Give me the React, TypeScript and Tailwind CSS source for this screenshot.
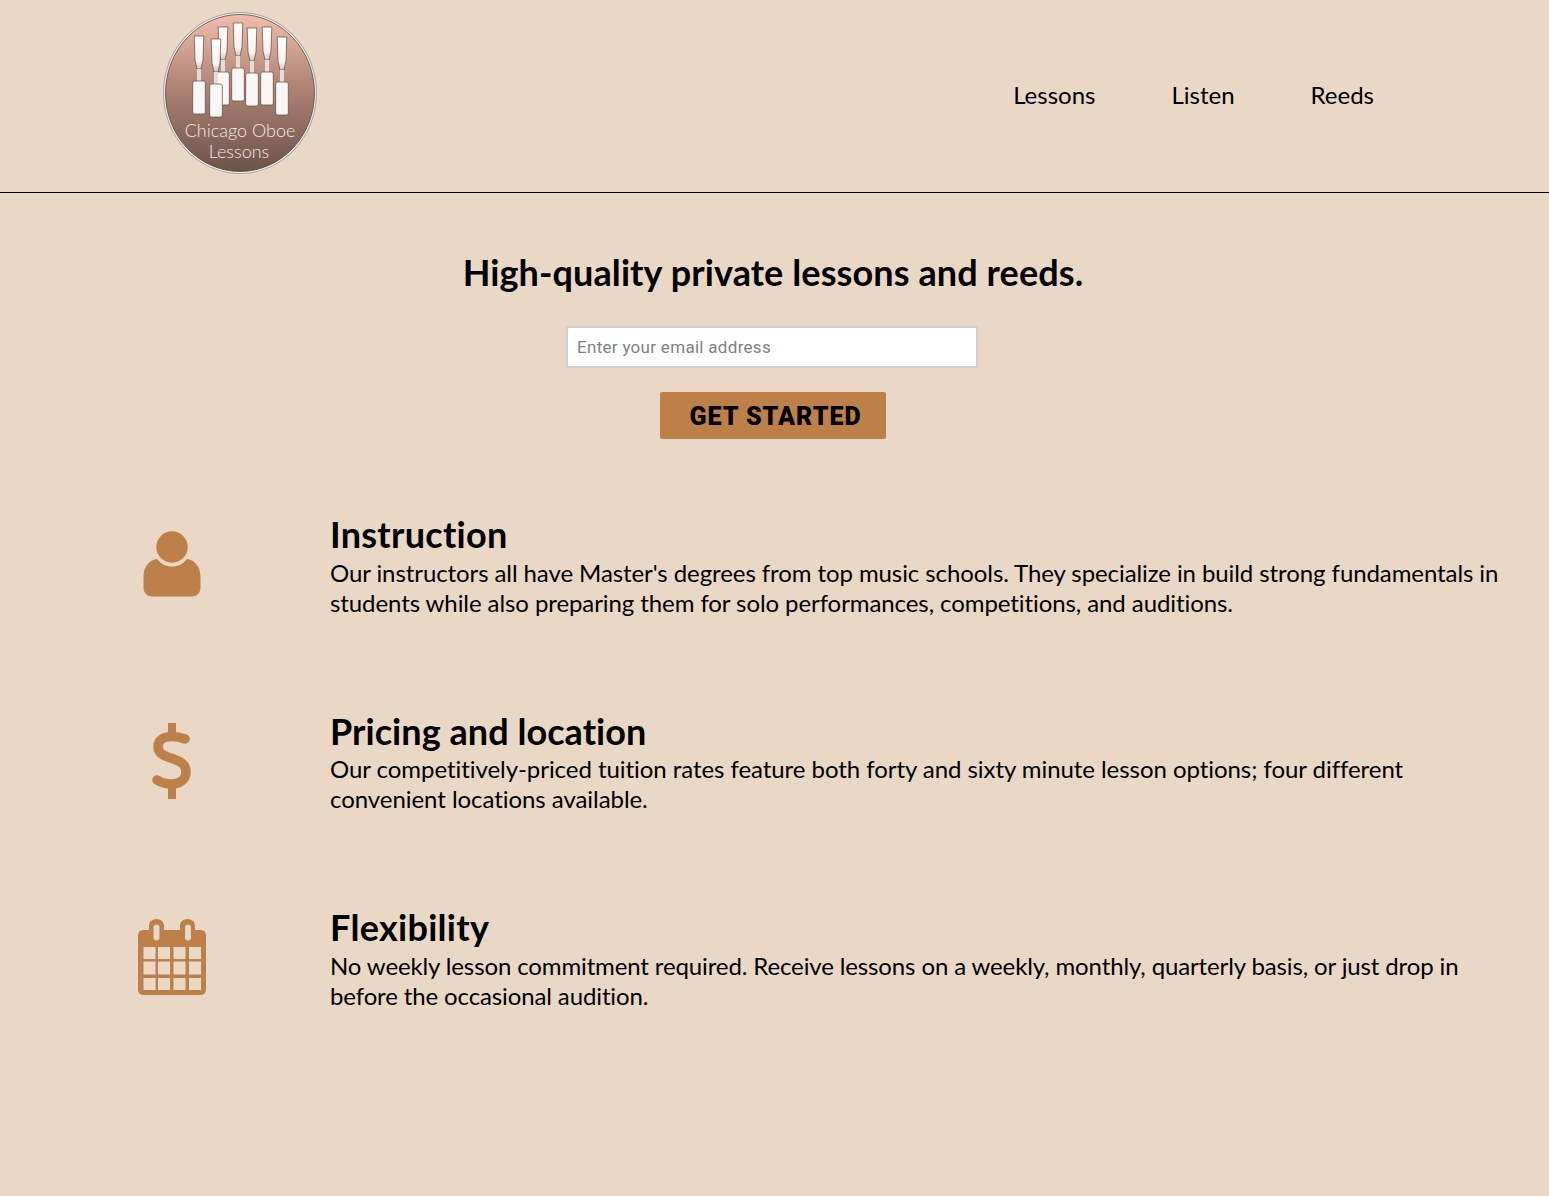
function Reed({ x, y }: { x: number; y: number }) {
  return (
    <g transform={`translate(${x} ${y})`}>
      <path d="M-4.800 0H4.800L4 24L2 33H-2L-4 24Z" fill="url(#blade)" stroke="#5b4742" strokeWidth="0.7" />
      <rect x="-2" y="33" width="4" height="12" fill="#e4dcd8" />
      <rect x="-6.300" y="45" width="12.600" height="33" rx="2" fill="#f8f7f6" stroke="#5b4742" strokeWidth="0.7" />
    </g>
  );
}

function Logo() {
  return (
    <svg width="157" height="168" viewBox="0 0 157 168" className="block">
      <defs>
        <linearGradient id="disc" x1="0" y1="0" x2="0" y2="1">
          <stop offset="0" stopColor="#f1bcaa" />
          <stop offset="0.5" stopColor="#a97f70" />
          <stop offset="1" stopColor="#6e5249" />
        </linearGradient>
        <linearGradient id="blade" x1="0" y1="0" x2="0" y2="1">
          <stop offset="0" stopColor="#ffffff" />
          <stop offset="0.75" stopColor="#f6f3f1" />
          <stop offset="1" stopColor="#cfc4bf" />
        </linearGradient>
      </defs>
      <ellipse cx="78" cy="81" rx="77" ry="81" fill="#a8a3a0" />
      <ellipse cx="78" cy="81" rx="76" ry="80" fill="#f1f0ef" />
      <ellipse cx="78" cy="81" rx="74.500" ry="78.500" fill="url(#disc)" stroke="#5d4741" strokeWidth="0.8" />
      <Reed x={61} y={15} />
      <Reed x={76} y={11} />
      <Reed x={90} y={16} />
      <Reed x={105} y={15} />
      <Reed x={37} y={24} />
      <Reed x={54} y={27} />
      <Reed x={120} y={25} />
      <text x="78" y="125" textAnchor="middle" fill="#f0ebe8" fontSize="18" fontFamily="Lato, sans-serif" fontWeight="300">
        Chicago Oboe
      </text>
      <text x="77" y="146" textAnchor="middle" fill="#f0ebe8" fontSize="18" fontFamily="Lato, sans-serif" fontWeight="300">
        Lessons
      </text>
    </svg>
  );
}

function PersonIcon() {
  return (
    <svg width="58" height="68" viewBox="0 0 58 68" fill="#bc8048">
      <circle cx="29" cy="17" r="15.700" />
      <path d="M14 29C18 34 23 36.500 29 36.500S40 34 44 29C52 30 57.500 37 57.500 47V57C57.500 63 54 66.500 49 66.500H9C4 66.500 .5 63 .5 57V47C.5 37 6 30 14 29Z" />
    </svg>
  );
}

function DollarIcon() {
  return (
    <svg width="40" height="78" viewBox="0 0 40 78" fill="none">
      <path d="M16 1H24V11H16ZM16 66H24V77H16Z" fill="#bc8048" />
      <path
        d="M33 17C29 15.500 25 14.500 20 14.500C11 14.500 6 18.500 6 24.500C6 31.500 12 34 20 36.500C28 39 34 42 34 50C34 57.500 28 62 19.500 62C14 62 9 60.500 5 58"
        stroke="#bc8048"
        strokeWidth="9.500"
        strokeLinecap="round"
      />
    </svg>
  );
}

function CalendarIcon() {
  const cols = [5.500, 20, 35.500, 51];
  const rows = [
    { y: 28, h: 12 },
    { y: 42.500, h: 13 },
    { y: 59, h: 12 },
  ];
  return (
    <svg width="68" height="76" viewBox="0 0 68 76">
      <path
        fillRule="evenodd"
        fill="#bc8048"
        d="M11 11V7C11 3 14 0 18.500 0S26 3 26 7V11H42V7C42 3 45 0 49.500 0S57 3 57 7V11H62C66 11 68 13 68 17V70C68 74 66 76 62 76H6C2 76 0 74 0 70V17C0 13 2 11 6 11ZM15.500 8V19C15.500 20.500 17 21.500 18.500 21.500S21.500 20.500 21.500 19V8C21.500 6.500 20 5.500 18.500 5.500S15.500 6.500 15.500 8ZM47 8V19C47 20.500 48.500 21.500 50 21.500S53 20.500 53 19V8C53 6.500 51.500 5.500 50 5.500S47 6.500 47 8Z"
      />
      {rows.map((r) =>
        cols.map((x) => <rect key={`${x}-${r.y}`} x={x} y={r.y} width="12" height={r.h} fill="#ebd9c8" />),
      )}
    </svg>
  );
}

const features = [
  {
    icon: <PersonIcon />,
    pad: "pt-[18px]",
    titleClass: "tracking-[0.27px]",
    bodyClass: "pt-px tracking-[-0.085px]",
    title: "Instruction",
    body: "Our instructors all have Master's degrees from top music schools. They specialize in build strong fundamentals in students while also preparing them for solo performances, competitions, and auditions.",
  },
  {
    icon: <DollarIcon />,
    pad: "pt-[13px]",
    titleClass: "tracking-[0.05px]",
    bodyClass: "pb-px tracking-[-0.055px]",
    title: "Pricing and location",
    body: "Our competitively-priced tuition rates feature both forty and sixty minute lesson options; four different convenient locations available.",
  },
  {
    icon: <CalendarIcon />,
    pad: "pt-[14px]",
    titleClass: "tracking-[0.3px]",
    bodyClass: "pt-px tracking-[-0.125px]",
    title: "Flexibility",
    body: "No weekly lesson commitment required. Receive lessons on a weekly, monthly, quarterly basis, or just drop in before the occasional audition.",
  },
];

export default function App() {
  return (
    <div className="min-h-[1196px] bg-[#e9d8c6] font-['Lato',sans-serif] text-black [font-variant-ligatures:none]">
      <header className="flex h-[193px] items-center border-b border-black pl-[162px] pr-[175px]">
        <Logo />
        <nav className="mb-[3px] ml-auto flex gap-[76px] text-2xl leading-8">
          <a>Lessons</a>
          <a>Listen</a>
          <a>Reeds</a>
        </nav>
      </header>
      <main>
        <section className="flex flex-col items-center pr-[5px] pt-[57px]">
          <h1 className="ml-[2px] text-[36px] font-bold leading-[45px] tracking-[0.1px]">High-quality private lessons and reeds.</h1>
          <input
            className="mt-[31px] h-[42px] w-[412px] border-2 border-[#cfcfcf] bg-white px-[9px] font-['Roboto',sans-serif] text-[17px] tracking-[0.3px] outline-none placeholder:text-[#808080]"
            placeholder="Enter your email address"
          />
          <button className="ml-[2px] mt-[24px] h-[47px] w-[226px] rounded-[2px] bg-[#bc8048] pl-[5px] pt-[2px] font-['Roboto',sans-serif] text-[25px] font-black tracking-[1px]">
            GET STARTED
          </button>
        </section>
        <section className="mt-[73px] flex flex-col gap-[90.500px]">
          {features.map((f) => (
            <div key={f.title} className="flex">
              <div className={`w-[330px] shrink-0 pl-[96px] ${f.pad}`}>
                <div className="flex w-[152px] justify-center">{f.icon}</div>
              </div>
              <div className="w-[1185px]">
                <h2 className={`text-[36px] font-bold leading-[45px] ${f.titleClass}`}>{f.title}</h2>
                <p className={`text-2xl leading-[30px] ${f.bodyClass}`}>{f.body}</p>
              </div>
            </div>
          ))}
        </section>
      </main>
    </div>
  );
}
